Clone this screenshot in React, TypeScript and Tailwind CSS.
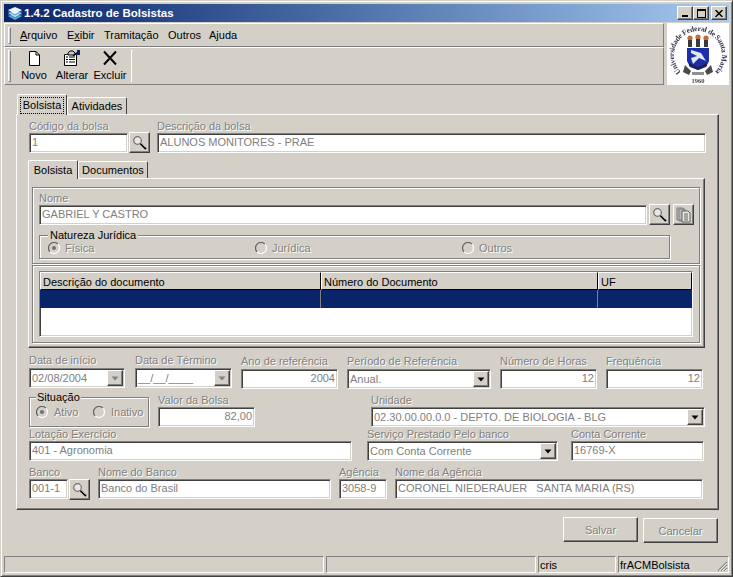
import React from "react";

const sunken = "border border-t-[#808080] border-l-[#808080] border-b-white border-r-white shadow-[inset_1px_1px_0_#404040,inset_-1px_-1px_0_#d4d0c8]";
const raised = "border border-t-white border-l-white border-b-[#404040] border-r-[#404040] shadow-[inset_-1px_-1px_0_#808080]";
const thinRaised = "border border-t-white border-l-white border-b-[#808080] border-r-[#808080]";
const disLabel = "text-[#808080] [text-shadow:1px_1px_0_#fff] leading-[13px] h-[13px] whitespace-nowrap";
const groove = "border border-[#808080] shadow-[inset_1px_1px_0_#fff,1px_1px_0_#fff]";

function Lens() {
  return (
    <svg width="16" height="16" viewBox="0 0 16 16">
      <circle cx="5.5" cy="5.5" r="3.8" fill="#e8e8e8" stroke="#707070" strokeWidth="1.2" />
      <path d="M8.5 8.5L14 14" stroke="#000" strokeWidth="2" />
      <path d="M8.5 7.5L13.5 12.5" stroke="#a0a0a0" strokeWidth="1" />
    </svg>
  );
}

function LensBtn({ cls = "" }: { cls?: string }) {
  return <div className={`${raised} flex items-center justify-center bg-[#d4d0c8] shrink-0 ${cls}`}><Lens /></div>;
}

function Arrow({ dis }: { dis?: boolean }) {
  return (
    <div className={`${raised} w-[16px] h-[16px] flex items-center justify-center shrink-0 bg-[#d4d0c8]`}>
      <svg width="8" height="5" viewBox="0 0 8 5"><path d="M0.5 0.5H7.5L4 4.5Z" fill={dis ? "#808080" : "#000"} /></svg>
    </div>
  );
}

function Input({ text, w, right }: { text?: string; w: string; right?: boolean }) {
  return (
    <div className={`${sunken} ${w} h-[20px] bg-white shrink-0 flex items-center px-[2px] pb-[2px] text-[#808080] whitespace-pre ${right ? "justify-end" : ""}`}>
      {text}
    </div>
  );
}

function Combo({ text, w, dis }: { text: string; w: string; dis?: boolean }) {
  return (
    <div className={`${sunken} ${w} h-[20px] bg-white shrink-0 flex items-center pl-[2px] pr-[1px] text-[#808080] whitespace-nowrap justify-between`}>
      <span>{text}</span>
      <Arrow dis={dis} />
    </div>
  );
}

function Radio({ on, label, gap = "gap-[5px]" }: { on?: boolean; label: string; gap?: string }) {
  return (
    <div className={`flex items-center ${gap}`}>
      <svg width="12" height="12" viewBox="0 0 12 12" className="shrink-0">
        <circle cx="6" cy="6" r="5" fill="#d4d0c8" />
        <path d="M2.110 9.890A5.500 5.500 0 0 1 9.890 2.110" fill="none" stroke="#606060" strokeWidth="1.200" />
        <path d="M9.890 2.110A5.500 5.500 0 0 1 2.110 9.890" fill="none" stroke="#fff" strokeWidth="1.200" />
        {on && <circle cx="6" cy="6" r="2" fill="#707070" />}
      </svg>
      <span className="text-[#808080] [text-shadow:1px_1px_0_#fff]">{label}</span>
    </div>
  );
}

function Field({ label, cls = "", children }: { label: string; cls?: string; children: React.ReactNode }) {
  return (
    <div className={`flex flex-col shrink-0 ${cls}`}>
      <div className={disLabel}>{label}</div>
      {children}
    </div>
  );
}

function Tab({ active, label, cls = "", focus, small }: { active?: boolean; label: string; cls?: string; focus?: boolean; small?: boolean }) {
  const h = active ? (small ? "h-[19px] z-10 relative -mb-px" : "h-[21px] z-10 relative -mb-px") : "h-[17px]";
  return (
    <div className={`border-t border-l border-r border-t-white border-l-white border-r-[#404040] rounded-t-[2px] bg-[#d4d0c8] flex items-center justify-center text-black shrink-0 ${h} ${cls}`}>
      <span className={focus ? "border border-dotted border-black w-[44px] text-center h-[17px] leading-[15px]" : ""}>{label}</span>
    </div>
  );
}

function Logo() {
  return (
    <div className="w-[62px] h-[62px] bg-white shrink-0 ml-[3px]">
      <svg width="62" height="62" viewBox="2 0 62 62" className="blur-[0.3px]">
        <defs>
          <path id="arcLogo" d="M16 49A24 24 0 1 1 50 49" />
        </defs>
        <text fontFamily="'Liberation Serif',serif" fontSize="7.500" fontWeight="700" fill="#33334d">
          <textPath href="#arcLogo" textLength="112" lengthAdjust="spacing">Universidade Federal de Santa Maria</textPath>
        </text>
        <circle cx="25" cy="15" r="2.600" fill="#c06a35" /><circle cx="33" cy="14" r="2.600" fill="#c06a35" /><circle cx="41" cy="15" r="2.600" fill="#c06a35" />
        <path d="M23 17h4v7h-4zM31 16h4v8h-4zM39 17h4v7h-4z" fill="#3a3a3a" />
        <path d="M22 25h22v13l-3 6-8 3-8-3-3-6z" fill="#1c2fa8" />
        <path d="M26 27l10 3 5 8-7-3-6 6-2-6 6-2-6-3z" fill="#dfe6f5" />
        <path d="M24 40l9 4 9-4v3l-9 4-9-4z" fill="#20205a" />
        <path d="M20 42l6 6-2 4-6-3zM46 42l-6 6 2 4 6-3z" fill="#4a4a4a" />
        <path d="M27 49h12v3H27z" fill="#909090" />
        <text x="33" y="60" textAnchor="middle" fontFamily="'Liberation Serif',serif" fontSize="6.500" fontWeight="700" fill="#444">1960</text>
      </svg>
    </div>
  );
}

export default function App() {
  return (
    <div className="w-[733px] h-[577px] bg-[#d4d0c8] overflow-hidden border border-t-[#d4d0c8] border-l-[#d4d0c8] border-b-[#404040] border-r-[#404040] shadow-[inset_1px_1px_0_#fff,inset_-1px_-1px_0_#808080] p-[3px] flex flex-col text-[11px] leading-[14px] text-black font-['Liberation_Sans',Arial,sans-serif]">
      {/* title bar */}
      <div className="h-[18px] shrink-0 bg-gradient-to-r from-[#0a246a] to-[#a6caf0] flex items-center pl-[3px] pr-[2px] mb-px">
        <svg width="16" height="16" viewBox="0 0 16 16" className="shrink-0 mr-[1px]">
          <path d="M1 11l7-3 7 3-7 4z" fill="#5fa8d8" />
          <path d="M1 8l7-3 7 3-7 4z" fill="#bfe0f2" />
          <path d="M1 5l7-3 7 3-7 4z" fill="#e8f4fb" />
          <path d="M1 6l7 4 7-4M1 9l7 4 7-4" fill="none" stroke="#3c88c0" strokeWidth="0.800" />
        </svg>
        <span className="text-white font-bold text-[11.5px]">1.4.2 Cadastro de Bolsistas</span>
        <div className="ml-auto flex">
          {[0, 1].map((k) => (
            <div key={k} className={`${raised} w-[16px] h-[14px] bg-[#d4d0c8] flex items-center justify-center`}>
              {k === 0 ? <div className="w-[6px] h-[2px] bg-black mt-[6px] mr-[1px]" /> : <div className="w-[9px] h-[9px] border border-black border-t-2" />}
            </div>
          ))}
          <div className={`${raised} w-[16px] h-[14px] bg-[#d4d0c8] flex items-center justify-center ml-[2px]`}>
            <svg width="8" height="7" viewBox="0 0 8 7"><path d="M0.500 0L7.500 7M7.500 0L0.500 7" stroke="#000" strokeWidth="1.500" /></svg>
          </div>
        </div>
      </div>

      {/* bars + logo */}
      <div className="flex h-[62px] shrink-0">
        <div className="w-[660px] flex flex-col shrink-0">
          <div className={`${thinRaised} h-[24px] flex items-center pl-[3px] shrink-0`}>
            <div className={`${thinRaised} w-[3px] h-[17px] mr-[9px]`} />
            <div className="flex">
              <span className="w-[47px]"><u>A</u>rquivo</span>
              <span className="w-[37px]">E<u>x</u>ibir</span>
              <span className="w-[64px]">Tramitação</span>
              <span className="w-[41px]">Outros</span>
              <span>A<u>j</u>uda</span>
            </div>
          </div>
          <div className={`${thinRaised} h-[38px] flex items-center pl-[3px] shrink-0`}>
            <div className={`${thinRaised} w-[3px] h-[32px] mr-[4px]`} />
            {[
              { t: "Novo", i: (
                <svg width="16" height="16" viewBox="0 0 16 16"><path d="M3.500 1.500H10L13.500 5V15.500H3.500Z" fill="#fff" stroke="#000" /><path d="M10 1.500V5H13.500" fill="none" stroke="#000" /></svg>
              ) },
              { t: "Alterar", i: (
                <svg width="18" height="16" viewBox="0 0 18 16"><path d="M1.500 4.500H13.500V15.500H1.500Z" fill="#fff" stroke="#000" /><path d="M3 7h2M3 9.500h2M3 12h2M6 7h6M6 9.500h6M6 12h6" stroke="#000" /><path d="M5 3l2-2h3l2 2v2H5z" fill="#c8c8c8" stroke="#000" /><path d="M10 6l5-4" stroke="#000" strokeWidth="1.500" /><path d="M14 0h3v5h-3z" fill="#0a246a" /></svg>
              ) },
              { t: "Excluir", i: (
                <svg width="16" height="16" viewBox="0 0 16 16"><path d="M2 1.500L14 14.500M14 1.500L2 14.500" stroke="#000" strokeWidth="2" /></svg>
              ) },
            ].map((b) => (
              <div key={b.t} className="w-[38px] flex flex-col items-center shrink-0">
                <div className="h-[16px] flex items-center">{b.i}</div>
                <span className="mt-[2px]">{b.t}</span>
              </div>
            ))}
            <div className={`${thinRaised} w-[2px] h-[32px] ml-[2px] border-r-0 border-b-0 border-l-[#808080]`} />
          </div>
        </div>
        <Logo />
      </div>

      {/* outer tabs */}
      <div className="flex items-end pl-[13px] mt-[9px] h-[20px] shrink-0">
        <Tab active focus label="Bolsista" cls="w-[50px]" />
        <Tab label="Atividades" cls="w-[60px]" />
      </div>

      {/* outer panel */}
      <div className={`${raised} ml-[12px] w-[703px] h-[396px] shrink-0 flex flex-col pl-[12px]`}>
        <div className="flex h-[38px] mt-[5px] shrink-0">
          <Field label="Código da bolsa"><Input text="1" w="w-[99px]" /></Field>
          <LensBtn cls="w-[21px] h-[21px] mt-[12px] ml-[1px]" />
          <Field label="Descrição da bolsa" cls="ml-[7px]"><Input text="ALUNOS MONITORES - PRAE" w="w-[549px]" /></Field>
        </div>

        {/* inner tabs */}
        <div className="flex items-end h-[18px] mt-[2px] -ml-px shrink-0">
          <Tab active small label="Bolsista" cls="w-[50px]" />
          <Tab label="Documentos" cls="w-[70px]" />
        </div>
        <div className={`${raised} -ml-px w-[677px] h-[170px] shrink-0 pl-[3px] pt-[8px]`}>
          <div className={`${groove} h-[77px] w-[668px] pl-[6px] pt-[4px] flex flex-col`}>
            <div className="flex">
              <Field label="Nome"><Input text="GABRIEL Y CASTRO" w="w-[608px]" /></Field>
              <LensBtn cls="w-[21px] h-[21px] mt-[12px] ml-[2px]" />
              <div className={`${raised} w-[21px] h-[21px] mt-[12px] ml-[3px] flex items-center justify-center shrink-0`}>
                <svg width="16" height="16" viewBox="0 0 16 16"><path d="M1 1h6v12H1zM3 2h6v12H3z" fill="#b8b8b8" stroke="#808080" /><path d="M6 4h6l2 2v9H6z" fill="#e8e8e8" stroke="#606060" /><path d="M8 7h4M8 9h4M8 11h4M8 13h4" stroke="#606060" /></svg>
              </div>
            </div>
            <div className={`${groove} relative w-[631px] h-[24px] mt-[10px] flex items-center pl-[8px]`}>
              <span className="absolute left-[8px] -top-[7px] bg-[#d4d0c8] px-[2px] leading-[13px]">Natureza Jurídica</span>
              <div className="w-[207px] mt-[2px]"><Radio on label="Física" /></div>
              <div className="w-[207px] mt-[2px]"><Radio label="Jurídica" /></div>
              <div className="mt-[2px]"><Radio label="Outros" /></div>
            </div>
          </div>
          <div className={`${groove} h-[78px] w-[668px] mt-px pl-[6px] pt-[5px]`}>
            <div className={`${sunken} w-[654px] h-[66px] bg-white flex flex-col`}>
              <div className="flex h-[18px] shrink-0 bg-[#d4d0c8] text-black">
                {[["Descrição do documento", "w-[281px]"], ["Número do Documento", "w-[277px]"], ["UF", "w-[94px]"]].map(([t, w]) => (
                  <div key={t} className={`${w} border-t border-l border-t-white border-l-white border-r border-b border-r-black border-b-black flex items-center pl-[2px] pt-px`}>{t}</div>
                ))}
              </div>
              <div className="flex h-[18px] shrink-0 bg-[#0a246a]">
                <div className="w-[281px] border-r border-[#808080]" />
                <div className="w-[277px] border-r border-[#808080]" />
                <div className="w-[94px]" />
              </div>
            </div>
          </div>
        </div>

        {/* form rows */}
        <div className="flex h-[41px] mt-[4px] shrink-0">
          <Field label="Data de início" cls="w-[106px] mt-[2px]"><div className="mt-[1px]"><Combo dis text="02/08/2004" w="w-[96px]" /></div></Field>
          <Field label="Data de Término" cls="w-[106px] mt-[2px]"><div className="mt-[1px]"><Combo dis text="__/__/____" w="w-[97px]" /></div></Field>
          <Field label="Ano de referência" cls="w-[106px] mt-[3px]"><div className="mt-[1px]"><Input right text="2004" w="w-[97px]" /></div></Field>
          <Field label="Período de Referência" cls="w-[153px] mt-[3px]"><div className="mt-[1px]"><Combo text="Anual." w="w-[144px]" /></div></Field>
          <Field label="Número de Horas" cls="w-[106px] mt-[3px]"><div className="mt-[1px]"><Input right text="12" w="w-[97px]" /></div></Field>
          <Field label="Frequência" cls="mt-[3px]"><div className="mt-[1px]"><Input right text="12" w="w-[97px]" /></div></Field>
        </div>
        <div className="flex h-[34px] shrink-0">
          <div className={`${groove} relative w-[120px] h-[30px] mt-[4px] flex items-center pl-[6px] shrink-0`}>
            <span className="absolute left-[6px] -top-[7px] bg-[#d4d0c8] px-[1px] leading-[13px]">Situação</span>
            <div className="w-[57px]"><Radio on label="Ativo" gap="gap-[6px]" /></div>
            <Radio label="Inativo" gap="gap-[6px]" />
          </div>
          <Field label="Valor da Bolsa" cls="ml-[9px] mt-px"><Input right text="82,00" w="w-[97px]" /></Field>
          <Field label="Unidade" cls="ml-[116px] mt-px"><Combo text="02.30.00.00.0.0 - DEPTO. DE BIOLOGIA - BLG" w="w-[334px]" /></Field>
        </div>
        <div className="flex h-[39px] shrink-0">
          <Field label="Lotação Exercício" cls="mt-px"><Input text="401 - Agronomia" w="w-[323px]" /></Field>
          <Field label="Serviço Prestado Pelo banco" cls="ml-[15px] mt-px"><Combo text="Com Conta Corrente" w="w-[191px]" /></Field>
          <Field label="Conta Corrente" cls="ml-[13px] mt-px"><Input text="16769-X" w="w-[133px]" /></Field>
        </div>
        <div className="flex shrink-0">
          <Field label="Banco"><Input text="001-1" w="w-[39px]" /></Field>
          <LensBtn cls="w-[21px] h-[21px] mt-[13px] ml-px" />
          <Field label="Nome do Banco" cls="ml-[8px]"><Input text="Banco do Brasil" w="w-[233px]" /></Field>
          <Field label="Agência" cls="ml-[8px]"><Input text="3058-9" w="w-[48px]" /></Field>
          <Field label="Nome da Agência" cls="ml-[8px]"><Input text="CORONEL NIEDERAUER   SANTA MARIA (RS)" w="w-[308px]" /></Field>
        </div>
      </div>

      {/* action buttons */}
      <div className="flex justify-end pr-[11px] mt-[7px] gap-[5px] shrink-0">
        <div className={`${raised} w-[75px] h-[25px] flex items-center justify-center text-[#808080] [text-shadow:1px_1px_0_#fff]`}>Salvar</div>
        <div className={`${raised} w-[75px] h-[25px] mt-px flex items-center justify-center text-[#808080] [text-shadow:1px_1px_0_#fff]`}>Cancelar</div>
      </div>

      {/* status bar */}
      <div className="flex mt-auto h-[17px] gap-[2px] shrink-0">
        <div className="w-[320px] border border-t-[#808080] border-l-[#808080] border-b-white border-r-white" />
        <div className="w-[210px] border border-t-[#808080] border-l-[#808080] border-b-white border-r-white" />
        <div className="w-[78px] border border-t-[#808080] border-l-[#808080] border-b-white border-r-white pl-px flex items-center">cris</div>
        <div className="relative flex-1 border border-t-[#808080] border-l-[#808080] border-b-white border-r-white pl-px flex items-center">
          frACMBolsista
          <svg width="12" height="12" viewBox="0 0 12 12" className="absolute right-0 bottom-0"><path d="M11 2L2 11M11 5L5 11M11 8L8 11" stroke="#808080" strokeWidth="1.200" /><path d="M11 3.200L3.200 11M11 6.200L6.200 11M11 9.200L9.200 11" stroke="#fff" /></svg>
        </div>
      </div>
    </div>
  );
}
